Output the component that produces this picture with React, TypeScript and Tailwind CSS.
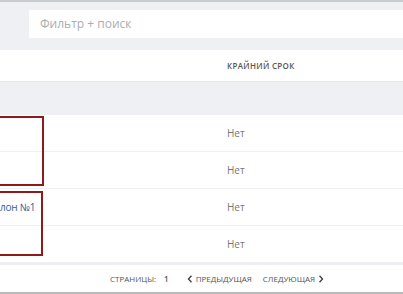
export default function App() {
  const rows = [
    { name: "", deadline: "Нет" },
    { name: "", deadline: "Нет" },
    { name: "лон №1", deadline: "Нет" },
    { name: "", deadline: "Нет" },
  ];

  return (
    <div
      className="relative h-[294px] w-[403px] overflow-hidden bg-white text-[#555]"
      style={{ fontFamily: '"Open Sans", "Noto Sans", sans-serif' }}
    >
      {/* Filter bar */}
      <div className="border-t-2 border-[#c9cbcf] bg-[#eef0f3] pb-[12px] pl-[29px] pt-[8px]">
        <div className="flex h-[28px] items-center bg-white pl-[11px] text-[12px] text-[#a9adb3]">
          Фильтр + поиск
        </div>
      </div>

      {/* Table header */}
      <div className="flex h-[32px] items-center border-b border-[#e4e7eb] bg-white">
        <div className="w-[227px]" />
        <div className="text-[8px] font-semibold tracking-[0.04em] text-[#555]">
          КРАЙНИЙ СРОК
        </div>
      </div>

      {/* Group row */}
      <div className="h-[33px] bg-[#eef0f3]" />

      {/* Rows */}
      {rows.map((row, i) => (
        <div
          key={i}
          className="flex h-[37px] items-center border-b border-[#eef0f3] text-[10px]"
        >
          <div className="w-[227px] text-[10px] tracking-[-0.02em] text-[#2f5f9a]">
            {row.name}
          </div>
          <div className="text-[#777]">{row.deadline}</div>
        </div>
      ))}

      {/* Pagination */}
      <div className="flex h-[29px] items-center border-t-2 border-[#eceef1] pl-[110px] text-[8px] text-[#555]">
        <span>СТРАНИЦЫ:</span>
        <span className="ml-[8px] font-semibold">1</span>
        <span className="ml-[18px] flex items-center gap-[3px]">
          <svg width="6" height="8" viewBox="0 0 6 8" fill="none">
            <path d="M4.5 0.8 L1.5 4 L4.5 7.2" stroke="#444" strokeWidth="1.4" />
          </svg>
          ПРЕДЫДУЩАЯ
        </span>
        <span className="ml-[11px] flex items-center gap-[3px]">
          СЛЕДУЮЩАЯ
          <svg width="6" height="8" viewBox="0 0 6 8" fill="none">
            <path d="M1.5 0.8 L4.5 4 L1.5 7.2" stroke="#444" strokeWidth="1.4" />
          </svg>
        </span>
      </div>
      <div className="h-[2px] bg-[#b8babe]" />

      {/* Highlight boxes */}
      <div className="absolute left-[-4px] top-[116px] h-[70px] w-[48px] border-2 border-[#8e1b1b]" />
      <div className="absolute left-[-4px] top-[191px] h-[65px] w-[47px] border-2 border-[#8e1b1b]" />
    </div>
  );
}
